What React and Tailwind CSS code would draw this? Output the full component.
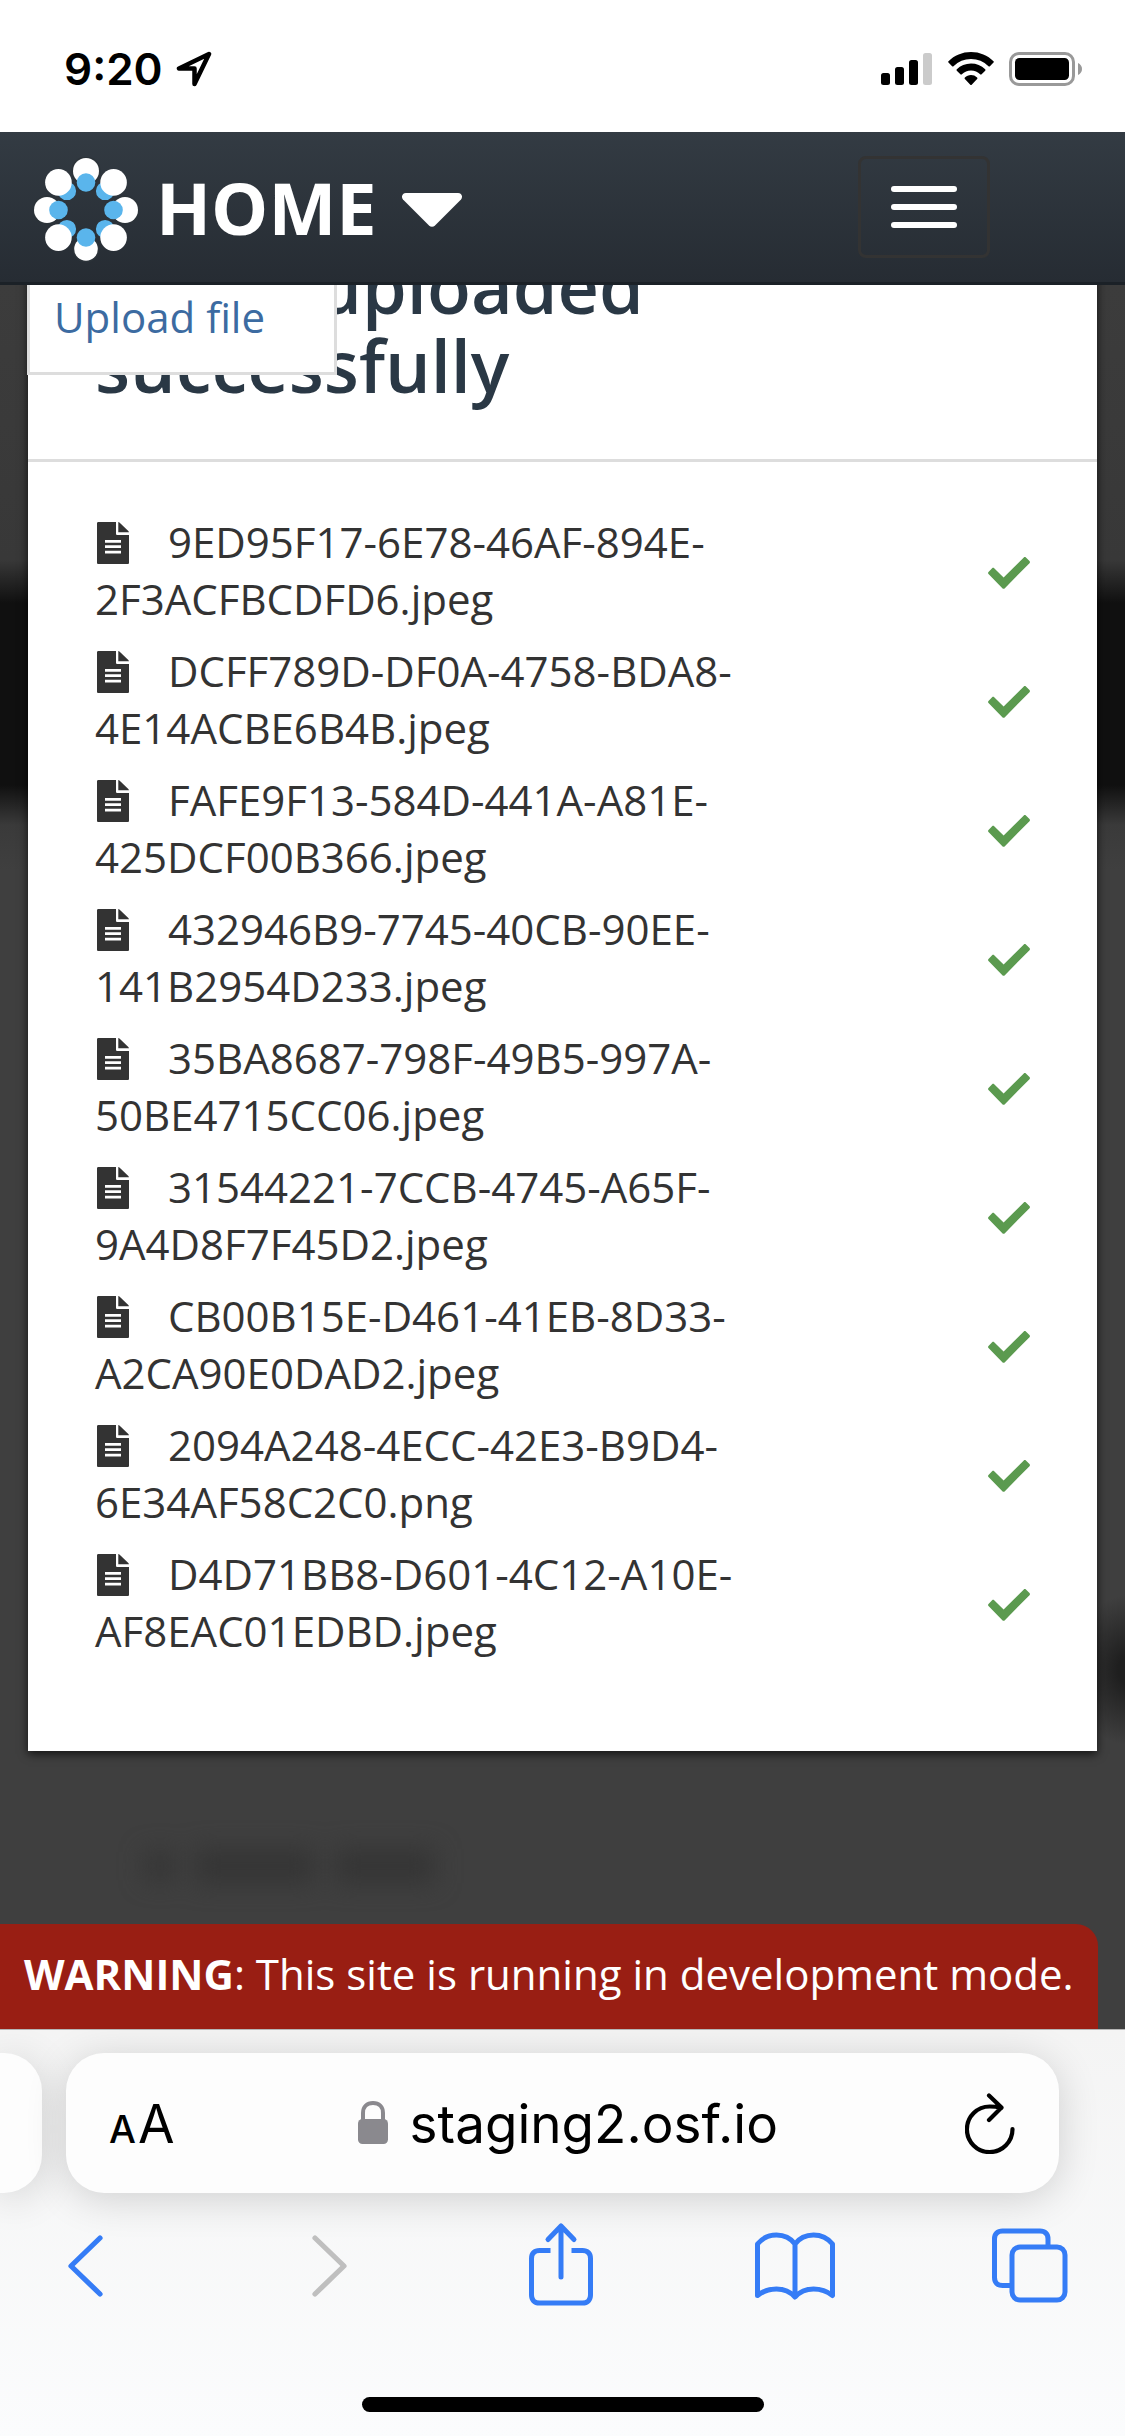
import React from "react";

const FILES = [
  "9ED95F17-6E78-46AF-894E-2F3ACFBCDFD6.jpeg",
  "DCFF789D-DF0A-4758-BDA8-4E14ACBE6B4B.jpeg",
  "FAFE9F13-584D-441A-A81E-425DCF00B366.jpeg",
  "432946B9-7745-40CB-90EE-141B2954D233.jpeg",
  "35BA8687-798F-49B5-997A-50BE4715CC06.jpeg",
  "31544221-7CCB-4745-A65F-9A4D8F7F45D2.jpeg",
  "CB00B15E-D461-41EB-8D33-A2CA90E0DAD2.jpeg",
  "2094A248-4ECC-42E3-B9D4-6E34AF58C2C0.png",
  "D4D71BB8-D601-4C12-A10E-AF8EAC01EDBD.jpeg",
];

function StatusBar() {
  return (
    <div className="flex h-[132px] items-center justify-between bg-white pt-[6px] pr-[43px] pl-[64px] text-black">
      <div className="flex items-center gap-[13px] font-['Inter',sans-serif] text-[44px] leading-[54px] font-semibold">
        <span>9:20</span>
        <svg width="36" height="36" viewBox="0 0 36 36" fill="none" stroke="currentColor" strokeWidth="4.500" strokeLinejoin="round" aria-hidden="true">
          <path d="M33 3L3 17.500h15.500V33z" />
        </svg>
      </div>
      <div className="flex items-center gap-[15px]">
        <svg width="52" height="34" viewBox="0 0 52 34" aria-label="Signal" role="img">
          <rect x="0" y="21" width="9" height="12" rx="2.500" />
          <rect x="14" y="15" width="9" height="18" rx="2.500" />
          <rect x="28" y="8" width="9" height="25" rx="2.500" />
          <rect x="42" y="1" width="9" height="32" rx="2.500" fill="#cbcbcb" />
        </svg>
        <svg width="46" height="34" viewBox="0 0 46 34" aria-label="Wi-Fi" role="img">
          <path d="M23 0C14.300 0 6.300 3.400.500 9.200a1 1 0 0 0 0 1.400l3.600 3.600a1 1 0 0 0 1.400 0A25 25 0 0 1 23 7a25 25 0 0 1 17.500 7.200 1 1 0 0 0 1.400 0l3.600-3.600a1 1 0 0 0 0-1.400C39.700 3.400 31.700 0 23 0z" />
          <path d="M23 11.500c-5.500 0-10.500 2.200-14.200 5.800a1 1 0 0 0 0 1.400l3.600 3.600a1 1 0 0 0 1.400 0A13.300 13.300 0 0 1 23 18.500c3.600 0 6.800 1.400 9.200 3.800a1 1 0 0 0 1.400 0l3.600-3.600a1 1 0 0 0 0-1.400A20.400 20.400 0 0 0 23 11.500z" />
          <path d="M23 23c-2.400 0-4.500.9-6.100 2.400a1 1 0 0 0 0 1.500l5.400 5.800a1 1 0 0 0 1.400 0l5.400-5.800a1 1 0 0 0 0-1.500A9 9 0 0 0 23 23z" />
        </svg>
        <svg width="73" height="34" viewBox="0 0 73 34" aria-label="Battery" role="img">
          <rect x="1.500" y="1.500" width="63" height="31" rx="8.500" fill="none" stroke="#999" strokeWidth="3" />
          <rect x="6" y="6" width="54" height="22" rx="4.500" />
          <path d="M69 11c2.500 1 4 3.400 4 6s-1.500 5-4 6z" fill="#999" />
        </svg>
      </div>
    </div>
  );
}

function Logo() {
  const diagonals = [45, 135, 225, 315];
  const straights = [0, 90, 180, 270];
  return (
    <svg className="mt-1.5" width="106" height="106" viewBox="-53 -53 106 106" aria-hidden="true">
      {diagonals.map((a) => (
        <circle key={a} transform={`rotate(${a})`} cy="-27" r="9.200" fill="#5ab5ec" />
      ))}
      {straights.map((a) => (
        <g key={a} transform={`rotate(${a})`}>
          <circle cy="-39" r={a === 180 ? 13.5 : 14.5} fill="#2c3339" />
          <circle cy="-28" r="10.500" fill="#2c3339" />
        </g>
      ))}
      {diagonals.map((a) => (
        <circle key={a} transform={`rotate(${a})`} cy="-39" r="13.300" fill="#fff" />
      ))}
      {straights.map((a) => (
        <g key={a} transform={`rotate(${a})`}>
          <circle cy="-39" r={a === 180 ? 11.8 : 13} fill="#fff" />
          <circle cy="-27.500" r="9.300" fill="#5ab5ec" />
        </g>
      ))}
    </svg>
  );
}

function NavBar() {
  return (
    <header className="relative z-20 flex h-[153px] items-center justify-between border-b-[3px] border-[#1b2127] bg-gradient-to-b from-[#333b43] to-[#262c33] pr-[135px] pl-[33px]">
      <button type="button" className="flex items-center gap-[17px] text-white">
        <Logo />
        <span className="text-[72px] leading-[98px] font-bold">HOME</span>
        <svg className="ml-2 mt-1.5" width="60" height="34" viewBox="0 0 60 34" fill="currentColor" aria-hidden="true">
          <path d="M4 0h52c3.600 0 5.200 3.800 3 6.500L33 32.500c-1.700 1.700-4.300 1.700-6 0L1 6.500C-1.200 3.800.400 0 4 0z" />
        </svg>
      </button>
      <button type="button" aria-label="Toggle navigation" className="flex h-[102px] w-[132px] flex-col items-center justify-center gap-[12px] rounded-lg border-[3px] border-[#333]">
        <span className="h-[6px] w-[66px] rounded-[3px] bg-white" />
        <span className="h-[6px] w-[66px] rounded-[3px] bg-white" />
        <span className="h-[6px] w-[66px] rounded-[3px] bg-white" />
      </button>
    </header>
  );
}

function FileIcon() {
  return (
    <svg className="mr-[39px] ml-[2px] inline-block align-[-6px]" width="32" height="42" viewBox="0 0 32 42" aria-hidden="true">
      <path fill="#333" fillRule="evenodd" d="M1.500 0H19v11.500c0 1 .5 1.500 1.500 1.500H32v27.500c0 1-.5 1.500-1.500 1.500h-29C.500 42 0 41.500 0 40.500v-39C0 .500.500 0 1.500 0zM8 18v2.700h16V18zm0 5.300V26h16v-2.700zm0 5.400v2.700h16v-2.700z" />
      <path fill="#333" d="M21.300 0c.5 0 1 .3 1.400.7l8.600 8.200c.4.400.7.900.7 1.400H21.300z" />
    </svg>
  );
}

function CheckIcon() {
  return (
    <svg className="mt-1.5" width="42" height="32" viewBox="0 0 42 32" role="img" aria-label="Uploaded">
      <path fill="#5b9a4f" d="M16.600 31.400c-.6.600-1.400.6-2 0L.500 17c-.6-.6-.6-1.500 0-2.100L4.100 11.200c.6-.6 1.500-.6 2.100 0l9.400 9.300L35.800.500c.6-.6 1.500-.6 2.100 0l3.600 3.600c.6.600.6 1.500 0 2.100z" />
    </svg>
  );
}

function UploadDialog() {
  return (
    <section role="dialog" aria-labelledby="upload-title" className="mx-[28px] -mt-[86px] bg-white shadow-[0_3px_9px_rgba(0,0,0,0.7)]">
      <div className="border-b-[3px] border-[#ddd] px-[67px] pt-[48px] pb-[54px]">
        <h1 id="upload-title" className="text-[72px] leading-[79px] font-semibold text-[#2a3845]">
          9 files uploaded successfully
        </h1>
      </div>
      <ul className="flex flex-col gap-[15px] px-[67px] pt-[51px] pb-[92px]">
        {FILES.map((name) => (
          <li key={name} className="flex items-center justify-between text-[42px] leading-[57px] text-[#333]">
            <span className="w-[70%]">
              <FileIcon />
              {name}
            </span>
            <CheckIcon />
          </li>
        ))}
      </ul>
    </section>
  );
}

function Warning() {
  return (
    <p className="mr-[27px] rounded-tr-[22px] bg-[#991e13] pt-[21px] pb-[27px] pl-[24px] text-[42px] leading-[57px] text-white">
      <strong className="font-bold">WARNING</strong>: This site is running in development mode.
    </p>
  );
}

function AddressBar() {
  return (
    <div className="flex h-[140px] gap-[24px] overflow-visible pr-[66px]">
      <div className="w-[42px] rounded-r-[38px] bg-[#fdfdfd] shadow-[0_6px_40px_rgba(0,0,0,0.16)]" />
      <div className="flex flex-1 items-center justify-between rounded-[38px] bg-[#fdfdfd] pr-[44px] pl-[43px] font-['Inter',sans-serif] text-black shadow-[0_6px_40px_rgba(0,0,0,0.16)]">
        <button type="button" aria-label="Page settings" className="flex items-baseline gap-[2px] pt-1.5">
          <span className="text-[38px] leading-[60px] font-medium">A</span>
          <span className="text-[53px] leading-[60px]">A</span>
        </button>
        <button type="button" className="flex items-center gap-[22px] pr-1">
          <svg width="30" height="44" viewBox="0 0 30 44" aria-hidden="true">
            <rect x="0" y="18" width="30" height="25" rx="4.500" fill="#8a898e" />
            <path d="M5 20v-8C5 6 9 2 15 2s10 4 10 10v8" fill="none" stroke="#8a898e" strokeWidth="4" />
          </svg>
          <span className="pt-0.5 text-[53px] leading-[66px]">staging2.osf.io</span>
        </button>
        <button type="button" aria-label="Reload">
          <svg width="50" height="61" viewBox="0 0 50 61" fill="none" stroke="currentColor" strokeWidth="4.200" strokeLinecap="round" strokeLinejoin="round">
            <path d="M47.500 36A22.800 22.800 0 1 1 25 13.500c4 0 7 .4 11.500 1.300M24 2.500l12.500 12L24 27" />
          </svg>
        </button>
      </div>
    </div>
  );
}

function ToolBar() {
  return (
    <nav className="mt-[26px] flex h-[94px] items-center justify-between pr-[55px] pl-[51px] text-[#357cf6]">
      <button type="button" aria-label="Back" className="flex w-[80px] pl-[17px]">
        <svg width="35" height="62" viewBox="0 0 35 62" fill="none" stroke="currentColor" strokeWidth="5.200" strokeLinecap="round" strokeLinejoin="round">
          <path d="M32 3L3 31l29 28" />
        </svg>
      </button>
      <button type="button" aria-label="Forward" disabled className="flex w-[80px] justify-end pr-[19px] text-[#bfbfbf]">
        <svg width="35" height="62" viewBox="0 0 35 62" fill="none" stroke="currentColor" strokeWidth="5.200" strokeLinecap="round" strokeLinejoin="round">
          <path d="M3 3l29 28L3 59" />
        </svg>
      </button>
      <button type="button" aria-label="Share" className="flex w-[80px] justify-center">
        <svg width="64" height="88" viewBox="0 0 64 88" fill="none" stroke="currentColor" strokeWidth="5" strokeLinejoin="round">
          <path d="M21.500 28.500h-11c-5 0-8 3-8 8V73c0 5 3 8 8 8h43c5 0 8-3 8-8V36.500c0-5-3-8-8-8h-11" />
          <path d="M32 55V4M19 17.500L32 4l13 13.500" strokeLinecap="round" />
        </svg>
      </button>
      <button type="button" aria-label="Bookmarks" className="flex w-[80px] justify-center">
        <svg width="80" height="68" viewBox="0 0 80 68" fill="none" stroke="currentColor" strokeWidth="5" strokeLinecap="round" strokeLinejoin="round">
          <path d="M40 12C35.500 6 29 3 21.500 3S7 6.500 2.500 12v51.500C7 60 14 57 21.500 57S35.500 60 40 65c4.500-5 11-8 18.500-8s14.500 3 19 6.500V12C73 6.500 66 3 58.500 3S44.500 6 40 12zM40 12v52" />
        </svg>
      </button>
      <button type="button" aria-label="Tabs" className="flex w-[80px] justify-center">
        <svg width="76" height="76" viewBox="0 0 76 76" fill="none" stroke="currentColor" strokeWidth="5">
          <rect x="20" y="19" width="53" height="53" rx="8" />
          <path d="M56 18v-7c0-5-3-8-8-8H10.500c-5 0-8 3-8 8v38.500c0 5 3 8 8 8H19" />
        </svg>
      </button>
    </nav>
  );
}

export default function App() {
  return (
    <div className="flex min-h-screen flex-col bg-white font-['Open_Sans',sans-serif]">
      <StatusBar />
      <NavBar />
      <main className="relative flex flex-1 flex-col bg-[radial-gradient(ellipse_60px_75px_at_calc(100%_+_5px)_1385px,#1f1f1f_20%,transparent),linear-gradient(180deg,#3c3c3c_0px,#383838_275px,#101010_318px,#101010_500px,#3a3a3a_540px,#3f3f3f_585px)]">
        <UploadDialog />
        <div className="absolute top-0 left-[27px] w-[310px] border-x-[3px] border-b-[3px] border-[#ddd] bg-white px-[24px] pt-[3px] pb-[27px]">
          <a href="#upload" className="block text-[42px] leading-[57px] text-[#3c6ba1]">
            Upload file
          </a>
        </div>
        <div className="flex min-h-[172px] flex-1 items-center gap-[20px] pt-[56px] pl-[145px] blur-[12px]" aria-hidden="true">
          <span className="h-[28px] w-[30px] bg-[#353535]" />
          <span className="h-[34px] w-[120px] bg-[#353535]" />
          <span className="h-[34px] w-[100px] bg-[#353535]" />
        </div>
        <Warning />
      </main>
      <footer className="overflow-hidden border-t border-[#b5b5b5] bg-gradient-to-b from-[#f4f4f4] to-[#fbfcfd] pt-[23px] pb-[24px]">
        <AddressBar />
        <ToolBar />
        <div className="mx-auto mt-[84px] h-[15px] w-[402px] rounded-full bg-black" />
      </footer>
    </div>
  );
}
